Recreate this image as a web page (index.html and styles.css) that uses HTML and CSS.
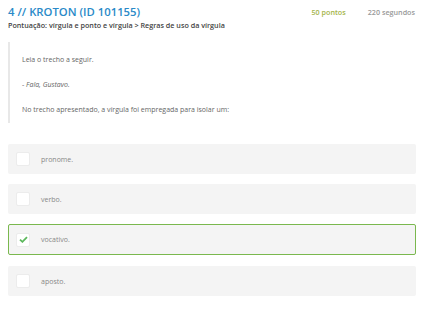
FILE: index.html
```html
<!DOCTYPE html>
<html lang="pt-BR">
<head>
    <meta charset="UTF-8">
    <title>Questão 4</title>
    <link rel="stylesheet" href="styles.css">
</head>
<body>

<!-- Question header -->
<div class="question-head">
    <div class="question-title">
        <h1>4 // KROTON (ID 101155)</h1>
        <p class="topic">Pontuação: vírgula e ponto e vírgula &gt; Regras de uso da vírgula</p>
    </div>
    <div class="question-meta">
        <span class="points">50 pontos</span>
        <span class="time">220 segundos</span>
    </div>
</div>

<!-- Statement -->
<blockquote class="statement">
    <p>Leia o trecho a seguir.</p>
    <p>- <em>Fala, Gustavo.</em></p>
    <p>No trecho apresentado, a vírgula foi empregada para isolar um:</p>
</blockquote>

<!-- Answer options -->
<ul class="options">
    <li class="option"><span class="check"></span>pronome.</li>
    <li class="option"><span class="check"></span>verbo.</li>
    <li class="option selected">
        <span class="check">
            <svg width="9" height="7" viewBox="0 0 9 7"><path d="M1 3.6 L3.4 5.8 L8 1.2" fill="none" stroke="#5cb85c" stroke-width="1.8"/></svg>
        </span>vocativo.
    </li>
    <li class="option"><span class="check"></span>aposto.</li>
</ul>

</body>
</html>
```

FILE: styles.css
```css
/* Base */
body {
    font-family: 'Open Sans', sans-serif;
    background-color: #fff;
    margin: 0;
    padding: 5px 7px 0 8px;
    color: #555;
}

/* Header */
.question-head {
    display: flex;
    justify-content: space-between;
    align-items: flex-start;
}

h1 {
    font-size: 11.3px;
    font-weight: 600;
    color: #2a8ac8;
    margin: 0;
    line-height: 14px;
}

.topic {
    font-size: 7.2px;
    font-weight: 600;
    color: #444;
    margin: 1px 0 0;
    line-height: 10px;
}

.question-meta {
    display: flex;
    gap: 22px;
    font-size: 7.2px;
    font-weight: 600;
    padding-top: 2px;
    padding-right: 1px;
}

.points {
    color: #a4b449;
}

.time {
    color: #999;
}

/* Statement block */
.statement {
    margin: 12px 0 0;
    padding: 11px 12px 7px;
    border-left: 2px solid #e8e8e8;
    font-size: 7px;
    color: #666;
}

.statement p {
    margin: 0 0 12px;
    line-height: 13px;
}

.statement p:last-child {
    margin-bottom: 0;
}

/* Options */
.options {
    list-style: none;
    margin: 21px 0 0;
    padding: 0;
}

.option {
    display: flex;
    align-items: center;
    height: 30px;
    background-color: #f4f4f4;
    border-radius: 2px;
    margin-bottom: 10px;
    padding-left: 8px;
    font-size: 7px;
    color: #888;
    box-sizing: border-box;
}

.option.selected {
    border: 1px solid #7ab84e;
    height: 31px;
    padding-left: 7px;
    margin-bottom: 11px;
}

.check {
    width: 14px;
    height: 14px;
    background-color: #fff;
    border: 1px solid #ececec;
    border-radius: 2px;
    box-sizing: border-box;
    margin-right: 11px;
    display: flex;
    align-items: center;
    justify-content: center;
}
```
